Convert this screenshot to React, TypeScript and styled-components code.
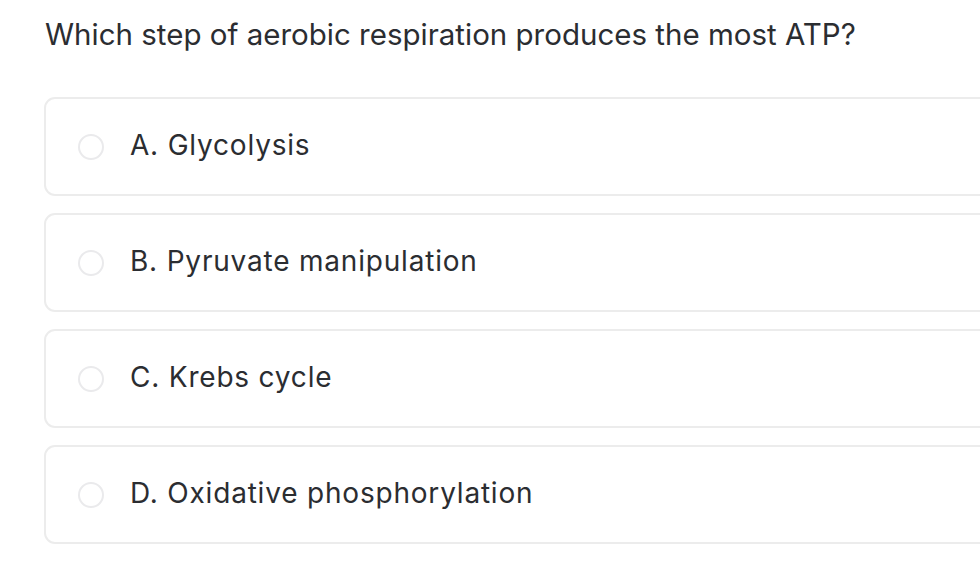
import React from "react";
import styled, { createGlobalStyle } from "styled-components";

const Global = createGlobalStyle`
  html, body { margin: 0; padding: 0; background: #ffffff; }
  body { overflow: hidden; font-family: Inter, "Liberation Sans", sans-serif; color: #2b2d31; }
`;

const Page = styled.div`
  width: 980px;
  height: 562px;
  overflow: hidden;
  padding: 14px 0 0 44px;
  box-sizing: border-box;
`;

const Question = styled.h1`
  margin: 0 0 43px 1px;
  font-size: 29.5px;
  font-weight: 400;
  line-height: 40px;
  color: #2b2d31;
`;

const Options = styled.div`
  display: flex;
  flex-direction: column;
  gap: 17px;
  margin-right: -40px;
`;

const Option = styled.label`
  display: flex;
  align-items: center;
  gap: 26px;
  height: 99px;
  box-sizing: border-box;
  padding-left: 32px;
  border: 2px solid #ececec;
  border-radius: 11px;
  background: #fff;
  cursor: pointer;
`;

const Radio = styled.span`
  width: 26px;
  height: 26px;
  box-sizing: border-box;
  border-radius: 50%;
  border: 2px solid #eaeaec;
  flex: none;
`;

const Label = styled.span`
  font-size: 28px;
  letter-spacing: 0.8px;
  line-height: 36px;
  color: #2b2d31;
  margin-top: -3px;
`;

const options = [
  "A. Glycolysis",
  "B. Pyruvate manipulation",
  "C. Krebs cycle",
  "D. Oxidative phosphorylation",
];

export default function App() {
  return (
    <>
      <Global />
      <Page>
        <Question>Which step of aerobic respiration produces the most ATP?</Question>
        <Options>
          {options.map((o) => (
            <Option key={o}>
              <Radio />
              <Label>{o}</Label>
            </Option>
          ))}
        </Options>
      </Page>
    </>
  );
}
